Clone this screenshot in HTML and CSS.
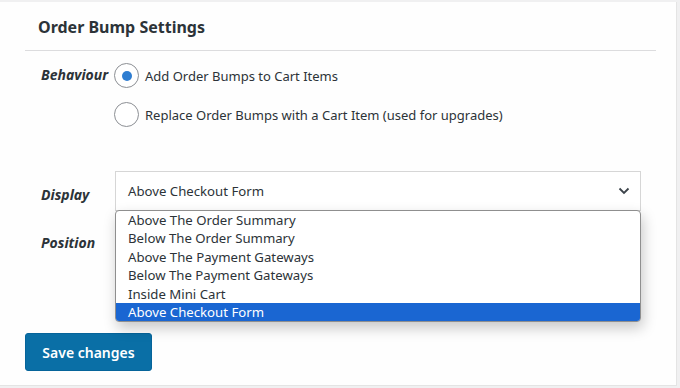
FILE: index.html
```html
<!DOCTYPE html>
<html>
<head>
<meta charset="utf-8">
<link rel="stylesheet" href="styles.css">
</head>
<body>
<div class="panel">
  <div class="header">
    <h2 class="title">Order Bump Settings</h2>
  </div>
  <div class="divider"></div>
  <div class="row behaviour">
    <div class="label">Behaviour</div>
    <div class="radios">
      <label class="radio-row"><span class="radio checked"></span><span class="radio-text">Add Order Bumps to Cart Items</span></label>
      <label class="radio-row"><span class="radio"></span><span class="radio-text">Replace Order Bumps with a Cart Item (used for upgrades)</span></label>
    </div>
  </div>
  <div class="row display">
    <div class="label">Display</div>
    <div class="select-wrap">
      <div class="select">
        <span class="select-value">Above Checkout Form</span>
        <svg class="chevron" width="12" height="8" viewBox="0 0 12 8"><path d="M1.5 1.5 L6 6 L10.5 1.5" fill="none" stroke="#3c434a" stroke-width="1.8"/></svg>
      </div>
      <ul class="dropdown">
        <li>Above The Order Summary</li>
        <li>Below The Order Summary</li>
        <li>Above The Payment Gateways</li>
        <li>Below The Payment Gateways</li>
        <li>Inside Mini Cart</li>
        <li class="selected">Above Checkout Form</li>
      </ul>
    </div>
  </div>
  <div class="row position">
    <div class="label">Position</div>
  </div>
  <div class="actions">
    <button class="btn">Save changes</button>
  </div>
</div>
</body>
</html>
```

FILE: styles.css
```css
* { box-sizing: border-box; }
body {
  margin: 0;
  background: #f0f0f1;
  font-family: "Noto Sans", "Open Sans", sans-serif;
  color: #1d2327;
}
.panel {
  width: 677px;
  height: 384px;
  margin-top: 2px;
  background: #fefefe;
  border-right: 1px solid #e4e4e4;
  border-bottom: 1px solid #e4e4e4;
  display: flex;
  flex-direction: column;
}
.header {
  padding: 13px 0 0 38px;
  height: 48px;
}
.title {
  margin: 0;
  font-size: 16px;
  font-weight: 700;
  line-height: 24px;
  color: #2c3338;
}
.divider {
  margin: 0 20px 0 25px;
  border-top: 1.5px solid #dcdcde;
}
.row {
  display: flex;
  padding-left: 41px;
}
.label {
  width: 73px;
  font-size: 14px;
  font-style: italic;
  font-weight: 700;
  color: #2c3338;
}
.behaviour { margin-top: 12px; }
.behaviour .label { line-height: 24px; width: 73px; }
.radios { display: flex; flex-direction: column; gap: 14px; }
.radio-row { display: flex; align-items: center; gap: 6px; }
.radio {
  width: 25px;
  height: 25px;
  border-radius: 50%;
  border: 1.5px solid #8c8f94;
  background: #fff;
  display: flex;
  align-items: center;
  justify-content: center;
}
.radio.checked::after {
  content: "";
  width: 10px;
  height: 10px;
  border-radius: 50%;
  background: #2e7dd1;
}
.radio-text { font-size: 13px; color: #2c3338; }
.display { margin-top: 44px; }
.display .label { width: 74px; line-height: 40px; padding-top: 4px; }
.select-wrap { position: relative; width: 526px; }
.select {
  height: 40px;
  border: 1px solid #d6d6d6;
  border-bottom-color: #cfcfcf;
  background: #fff;
  display: flex;
  align-items: center;
  justify-content: space-between;
  padding: 0 8px 0 12px;
}
.select-value { font-size: 13.2px; color: #2c3338; }
.chevron { margin-right: 2px; }
.dropdown {
  position: absolute;
  left: 0;
  top: 39px;
  width: 526px;
  margin: 0;
  padding: 0;
  list-style: none;
  background: #fff;
  border: 1px solid #8f8f8f;
  border-radius: 4px;
  overflow: hidden;
  box-shadow: 2px 6px 14px rgba(0,0,0,0.22);
  z-index: 2;
}
.dropdown li {
  font-size: 13.2px;
  line-height: 18.4px;
  padding-left: 12px;
  color: #2c3338;
}
.dropdown li.selected { background: #1a66d2; color: #fff; }
.position { margin-top: 18px; }
.position .label { line-height: 20px; }
.actions { margin-top: 80px; padding-left: 25px; }
.btn {
  width: 127px;
  height: 38px;
  background: #0a6fa6;
  color: #fff;
  border: 1px solid #06649a;
  border-radius: 3px;
  font-family: inherit;
  font-size: 14px;
  font-weight: 600;
  padding: 0;
}
```
